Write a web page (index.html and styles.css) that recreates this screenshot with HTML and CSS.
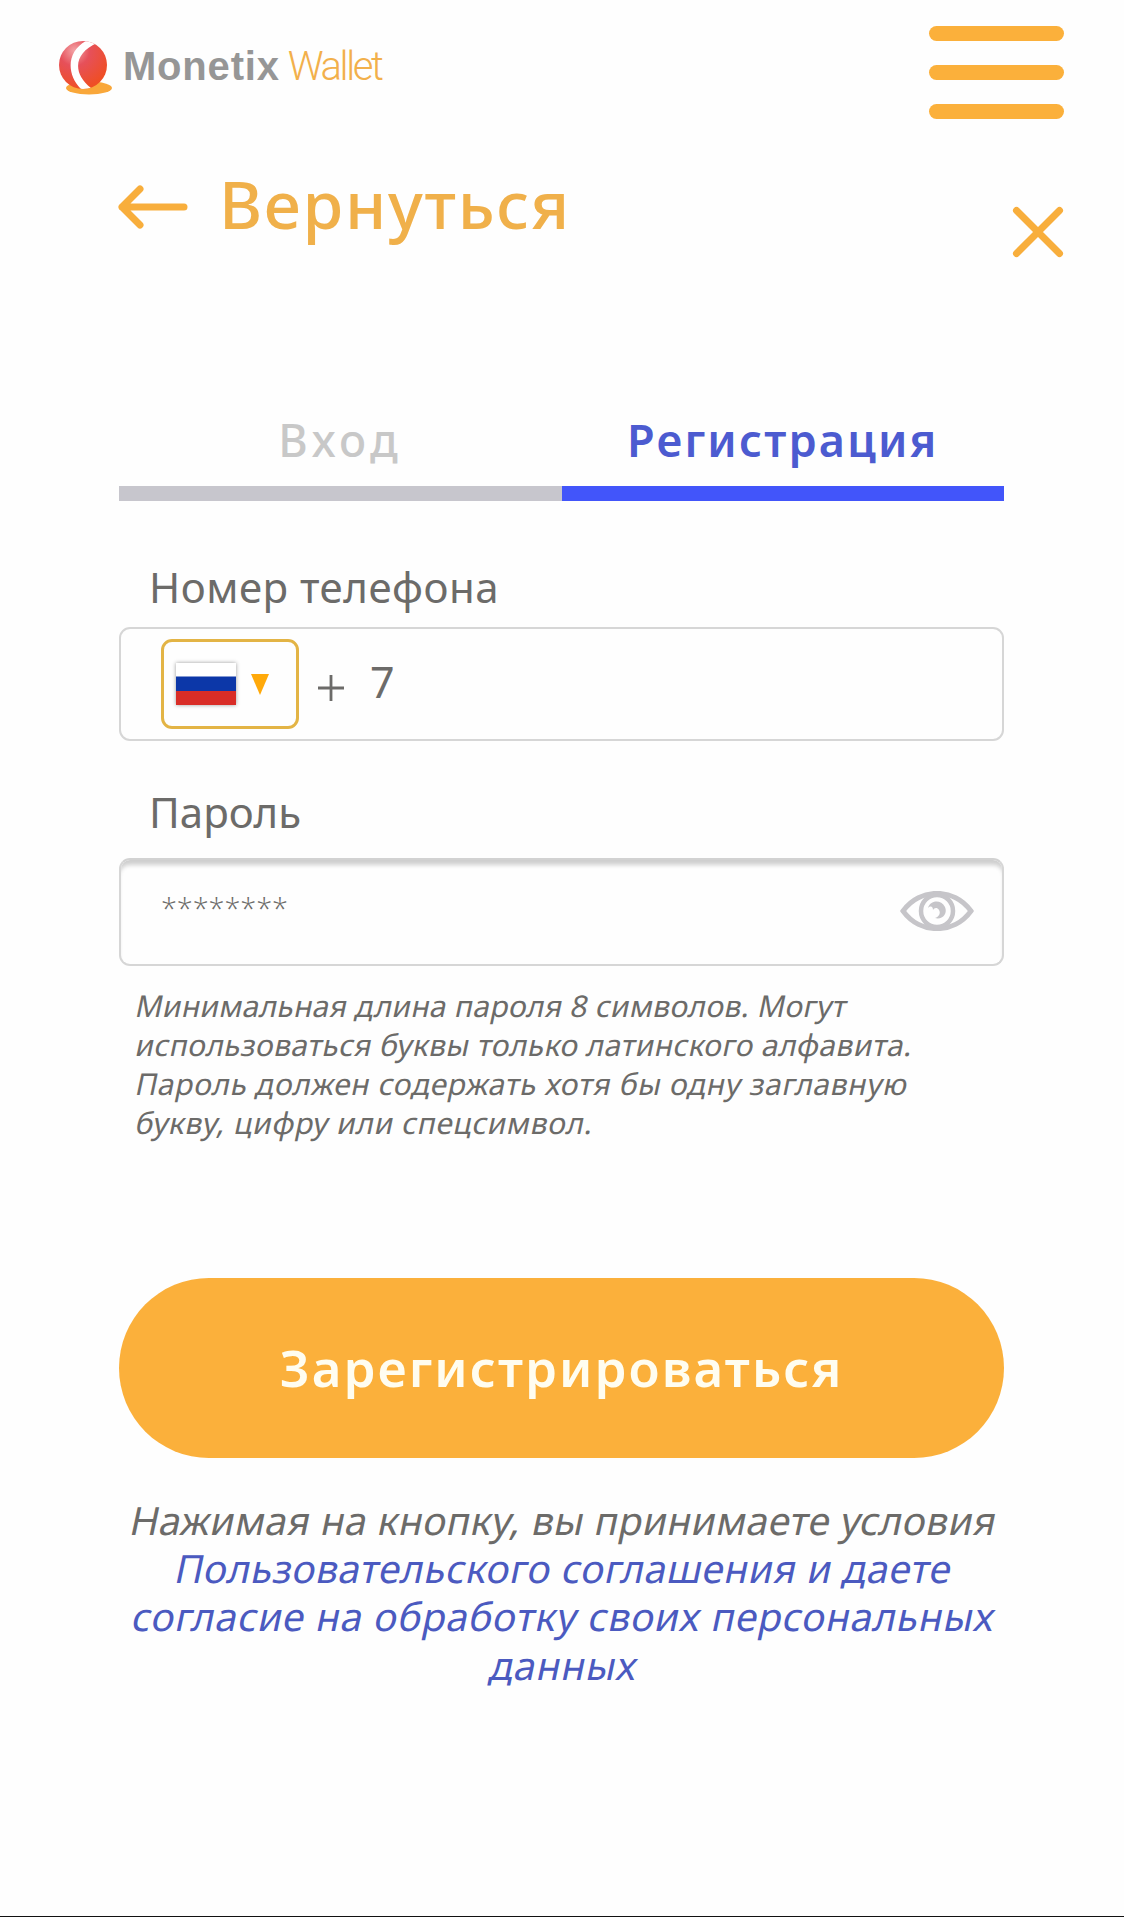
FILE: index.html
```
<!DOCTYPE html>
<html lang="ru">
<head>
<meta charset="utf-8">
<title>Monetix Wallet</title>
<link rel="stylesheet" href="styles.css">
</head>
<body>
<header class="header">
  <div class="logo">
    <svg class="logo-mark" width="58" height="60" viewBox="0 0 58 60">
      <defs>
        <radialGradient id="ball" cx="0.32" cy="0.2" r="0.8">
          <stop offset="0" stop-color="#f3a3a6"/>
          <stop offset="0.4" stop-color="#e6505a"/>
          <stop offset="1" stop-color="#ef4e25"/>
        </radialGradient>
        <clipPath id="ball-clip"><circle cx="27" cy="28" r="24"/></clipPath>
      </defs>
      <ellipse cx="33" cy="51" rx="23" ry="6.500" fill="#f9a73a"/>
      <circle cx="27" cy="28" r="24" fill="url(#ball)"/>
      <path d="M34 2C10 12 9 38 27 54L35 51C16 36 18 16 41 6Z" fill="#fff" clip-path="url(#ball-clip)"/>
    </svg>
    <span class="logo-name">Monetix</span>
    <span class="logo-kind">Wallet</span>
  </div>
  <div class="burger"><i></i><i></i><i></i></div>
</header>
<nav class="back-row">
  <a class="back">
    <svg width="72" height="48" viewBox="0 0 72 48" fill="none" stroke="#f8ae3c" stroke-width="7" stroke-linecap="round" stroke-linejoin="round"><path d="M22 6L4 24L22 42M4 24H66"/></svg>
    <span class="back-text">Вернуться</span>
  </a>
  <svg class="close" width="56" height="56" viewBox="0 0 56 56" fill="none" stroke="#f8ae3c" stroke-width="7" stroke-linecap="round"><path d="M6.500 6.500L49.500 49.500M49.500 6.500L6.500 49.500"/></svg>
</nav>
<main class="form">
  <div class="tabs">
    <div class="tab tab-login">Вход</div>
    <div class="tab tab-active">Регистрация</div>
  </div>
  <label class="label label-phone">Номер телефона</label>
  <div class="field field-phone">
    <div class="country">
      <svg class="flag" width="60" height="42" viewBox="0 0 60 42">
        <rect width="60" height="15" fill="#fff"/><rect y="13.500" width="60" height="15" fill="#0c37a8"/><rect y="28" width="60" height="14" fill="#d92d27"/>
      </svg>
      <svg class="caret" width="18" height="21" viewBox="0 0 18 21"><path d="M0 0H18L9 21Z" fill="#ffa90a"/></svg>
    </div>
    <svg class="plus" width="26" height="26" viewBox="0 0 26 26"><path d="M13 0V26M0 13H26" stroke="#6c6b69" stroke-width="2.8"/></svg>
    <span class="code">7</span>
  </div>
  <label class="label label-password">Пароль</label>
  <div class="field field-password">
    <span class="mask">********</span>
    <svg width="74" height="40" viewBox="0 0 74 40" fill="none" stroke="#c6c5c9">
      <path d="M3 20C20 -3.500 54 -3.500 71 20C54 43.500 20 43.500 3 20Z" stroke-width="5"/>
      <circle cx="37" cy="20" r="16" stroke-width="4.500"/>
      <path d="M28 17C30 9 41 8 45 16C48 23 42 29 35 27C39 26 41 22 39 19C37 16 34 17 33 19C33 16 31 14 28 17Z" fill="#c6c5c9" stroke="none"/>
    </svg>
  </div>
  <p class="hint">
    <span class="line h1">Минимальная длина пароля 8 символов. Могут</span>
    <span class="line h2">использоваться буквы только латинского алфавита.</span>
    <span class="line h3">Пароль должен содержать хотя бы одну заглавную</span>
    <span class="line h3">букву, цифру или спецсимвол.</span>
  </p>
  <button class="submit">Зарегистрироваться</button>
  <p class="terms">
    <span class="line t1">Нажимая на кнопку, вы принимаете условия</span>
    <a class="line t3">Пользовательского соглашения и даете</a>
    <a class="line t2">согласие на обработку своих персональных</a>
    <a class="line t2">данных</a>
  </p>
</main>
</body>
</html>
```
FILE: styles.css
```
* { box-sizing: border-box; }
body {
  margin: 0;
  height: 1917px;
  background: #fefefe;
  border-bottom: 1px solid #111;
  font-family: "Noto Sans", "Open Sans", sans-serif;
  color: #6c6b69;
}
svg { display: block; flex: none; }
.header {
  display: flex;
  justify-content: space-between;
  align-items: flex-start;
  height: 163px;
  padding: 26px 60px 0 56px;
}
.logo {
  display: flex;
  align-items: flex-start;
  padding-top: 11px;
  font: 40px/58px "Liberation Sans", sans-serif;
}
.logo-name {
  margin-left: 9px;
  font-weight: 700;
  color: #969696;
  letter-spacing: 0.8px;
}
.logo-kind {
  margin-left: 8px;
  font-family: Roboto, "Liberation Sans", sans-serif;
  font-weight: 300;
  color: #f2b04b;
  letter-spacing: -2.4px;
  padding-top: 1px;
}
.burger { display: flex; flex-direction: column; gap: 24px; }
.burger i { width: 135px; height: 15px; border-radius: 8px; background: #fbb03b; }
.back-row {
  display: flex;
  justify-content: space-between;
  align-items: flex-start;
  height: 100px;
  padding: 0 58px 0 118px;
}
.back { display: flex; align-items: flex-start; }
.back svg { margin-top: 20px; }
.back-text {
  margin-left: 29px;
  font-size: 66px;
  line-height: 80px;
  font-weight: 500;
  letter-spacing: 1.7px;
  color: #f0b04a;
}
.close { margin-top: 41px; }
.form { width: 885px; margin: 146px 0 0 119px; }
.tabs { display: grid; grid-template-columns: 1fr 1fr; text-align: center; }
.tab {
  height: 92px;
  font-size: 45px;
  line-height: 61px;
  font-weight: 500;
  letter-spacing: 4.4px;
  color: #c8c8c8;
  border-bottom: 15px solid #c7c6cd;
}
.tab-active {
  font-weight: 600;
  letter-spacing: 2.2px;
  color: #4c5bd0;
  border-color: #4255fa;
}
.label { display: block; font-size: 42px; line-height: 50px; padding-left: 30px; }
.label-phone { margin-top: 61px; letter-spacing: 0.5px; }
.label-password { margin-top: 46px; }
.field {
  display: flex;
  border: 2px solid #d6d6d6;
  border-radius: 11px;
}
.field-phone { height: 114px; margin-top: 15px; padding: 10px 0 0 40px; }
.country {
  display: flex;
  align-items: flex-start;
  width: 138px;
  height: 90px;
  padding: 21px 0 0 12px;
  border: 3px solid #e3b445;
  border-radius: 11px;
  gap: 15px;
}
.flag { box-shadow: 0 0 4px #9a9a9a; }
.caret { margin-top: 11px; }
.plus { margin: 36px 0 0 19px; }
.code { margin: 18px 0 0 26px; font-size: 43px; line-height: 50px; }
.field-password {
  justify-content: space-between;
  height: 108px;
  margin-top: 21px;
  padding: 31px 28px 0 40px;
  border-top-color: #d2d2d2;
  box-shadow: inset 0 7px 4px -2px #cfcfcf;
}
.mask {
  font-family: "Open Sans", "Noto Sans", sans-serif;
  font-size: 29px;
  font-weight: 300;
  line-height: 34px;
  letter-spacing: -0.1px;
}
.hint { margin: 20px 0 0 15px; font-size: 30px; line-height: 39px; }
.line { display: block; width: max-content; transform: skewX(-12deg); transform-origin: 0 80%; }
.h1 { letter-spacing: 0.26px; }
.h2 { letter-spacing: 0.36px; }
.h3 { letter-spacing: 0.58px; }
.submit {
  display: block;
  width: 100%;
  height: 180px;
  margin-top: 136px;
  padding: 0 0 2px;
  border: 0;
  border-radius: 90px;
  background: #fbb03b;
  color: #fffdf0;
  font: 600 51px "Noto Sans", sans-serif;
  letter-spacing: 2.1px;
}
.terms { margin: 38px 0 0; font-size: 39px; line-height: 48.2px; }
.terms .line { margin: 0 auto; }
.t1 { letter-spacing: 0.38px; }
.t2 { letter-spacing: 0.75px; color: #4b5ac0; }
.t3 { letter-spacing: 0.55px; color: #4b5ac0; }
```
